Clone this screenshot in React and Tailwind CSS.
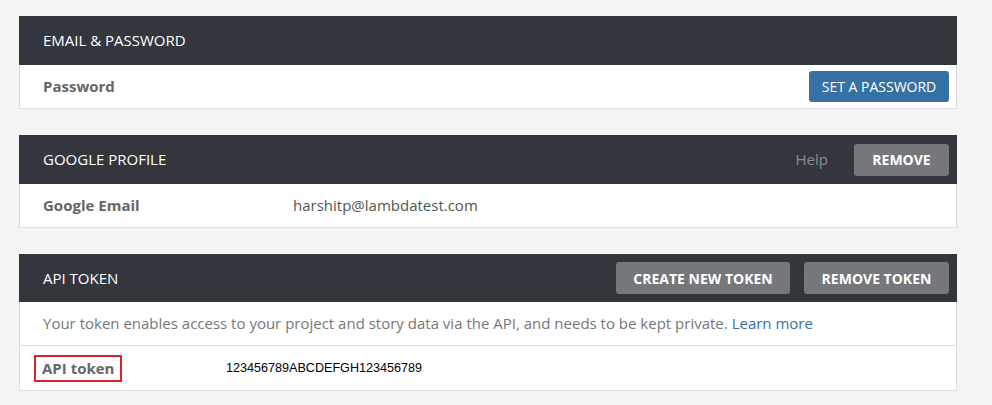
export default function App() {
  return (
    <div className="min-h-[405px] bg-[#f5f4f5] pl-[19px] pr-[35px] pt-[16px] pb-[14px] font-['Open_Sans',sans-serif]">
      <div className="flex flex-col gap-[26px]">
        {/* email & password */}
        <section className="bg-white border border-t-0 border-[#dedede]">
          <div className="h-[49px] bg-[#33363d] flex items-center justify-between -mx-px pl-[24px] pr-[8px]">
            <h2 className="text-[15px] text-white">EMAIL &amp; PASSWORD</h2>
          </div>
          <div className="h-[43px] flex items-center justify-between pl-[23px] pr-[7px]">
            <span className="text-[15px] font-bold text-[#666]">Password</span>
            <button className="h-[31px] w-[140px] rounded-[3px] bg-[#3572a3] text-[14px] text-white">
              SET A PASSWORD
            </button>
          </div>
        </section>

        {/* google profile */}
        <section className="bg-white border border-t-0 border-[#dedede]">
          <div className="h-[49px] bg-[#33363d] flex items-center justify-between -mx-px pl-[24px] pr-[8px]">
            <h2 className="text-[15px] text-white">GOOGLE PROFILE</h2>
            <div className="flex items-center gap-[26px]">
              <a className="text-[15px] text-[#8a8b8e]">Help</a>
              <button className="h-[32px] w-[95px] rounded-[3px] bg-[#75777b] text-[14px] font-bold text-white">
                REMOVE
              </button>
            </div>
          </div>
          <div className="h-[43px] flex items-center pl-[23px]">
            <span className="w-[250px] text-[15px] font-bold text-[#666]">Google Email</span>
            <span className="text-[15px] text-[#555]">harshitp@lambdatest.com</span>
          </div>
        </section>

        {/* api token */}
        <section className="bg-white border border-t-0 border-[#dedede]">
          <div className="h-[48px] bg-[#33363d] flex items-center justify-between -mx-px pl-[24px] pr-[8px]">
            <h2 className="text-[15px] text-white">API TOKEN</h2>
            <div className="flex items-center gap-[14px]">
              <button className="h-[32px] w-[174px] rounded-[3px] bg-[#75777b] text-[14px] font-bold text-white">
                CREATE NEW TOKEN
              </button>
              <button className="h-[32px] w-[145px] rounded-[3px] bg-[#75777b] text-[14px] font-bold text-white">
                REMOVE TOKEN
              </button>
            </div>
          </div>
          <div className="h-[44px] flex items-center pl-[23px] border-b border-[#e0e0e0]">
            <p className="text-[15px] text-[#777]">
              Your token enables access to your project and story data via the API, and needs to be kept private.{' '}
              <a className="text-[#3b6e99]">Learn more</a>
            </p>
          </div>
          <div className="h-[44px] flex items-center pl-[14px]">
            <span className="w-[192px]">
              <span className="inline-block border-2 border-[#d9222e] px-[6px] leading-[23px] text-[15px] font-bold text-[#666]">
                API token
              </span>
            </span>
            <span className="font-['Liberation_Sans',Arial,sans-serif] text-[12.6px] text-black">
              123456789ABCDEFGH123456789
            </span>
          </div>
        </section>
      </div>
    </div>
  );
}
